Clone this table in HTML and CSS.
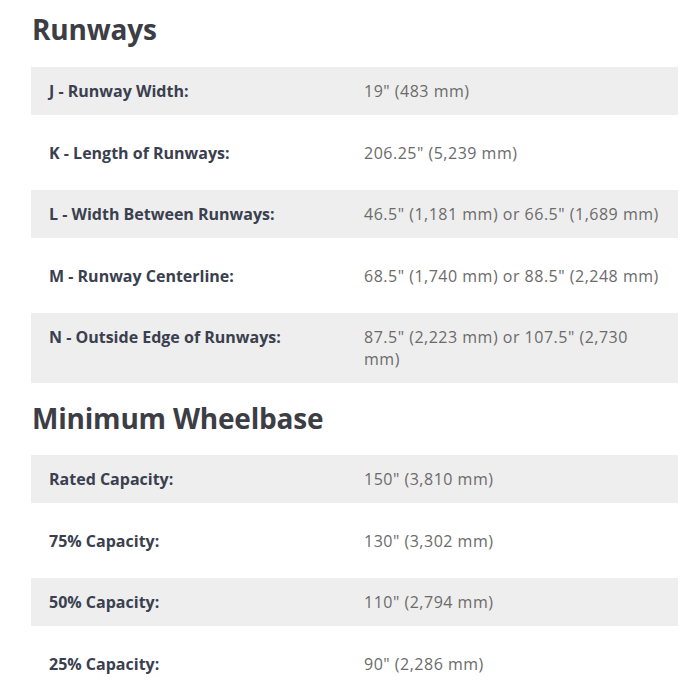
FILE: index.html
```html
<!DOCTYPE html>
<html>
<head>
<meta charset="utf-8">
<link rel="stylesheet" href="styles.css">
</head>
<body>
<div class="page">
  <h2 class="title">Runways</h2>
  <div class="spec">
    <div class="row shade"><div class="label">J - Runway Width:</div><div class="value">19" (483 mm)</div></div>
    <div class="row"><div class="label">K - Length of Runways:</div><div class="value">206.25" (5,239 mm)</div></div>
    <div class="row shade"><div class="label">L - Width Between Runways:</div><div class="value">46.5" (1,181 mm) or 66.5" (1,689 mm)</div></div>
    <div class="row"><div class="label">M - Runway Centerline:</div><div class="value">68.5" (1,740 mm) or 88.5" (2,248 mm)</div></div>
    <div class="row shade"><div class="label">N - Outside Edge of Runways:</div><div class="value">87.5" (2,223 mm) or 107.5" (2,730 mm)</div></div>
  </div>
  <h2 class="title second">Minimum Wheelbase</h2>
  <div class="spec">
    <div class="row shade"><div class="label">Rated Capacity:</div><div class="value">150" (3,810 mm)</div></div>
    <div class="row"><div class="label">75% Capacity:</div><div class="value">130" (3,302 mm)</div></div>
    <div class="row shade"><div class="label">50% Capacity:</div><div class="value">110" (2,794 mm)</div></div>
    <div class="row"><div class="label">25% Capacity:</div><div class="value">90" (2,286 mm)</div></div>
  </div>
</div>
</body>
</html>
```
FILE: styles.css
```css
html, body {
  margin: 0;
  padding: 0;
  background: #ffffff;
}
.page {
  width: 647px;
  margin-left: 31px;
  padding-top: 11px;
  font-family: "Open Sans", "Liberation Sans", sans-serif;
}
.title {
  margin: 0;
  padding-left: 1px;
  font-size: 28px;
  line-height: 36px;
  font-weight: 700;
  color: #3c3d45;
  letter-spacing: -0.2px;
  margin-bottom: 20px;
}
.title.second {
  margin-top: 17px;
  margin-bottom: 19px;
}
.spec {
  display: flex;
  flex-direction: column;
}
.row {
  display: grid;
  grid-template-columns: 315px 1fr;
  padding: 27px 15px 26px 18px;
  line-height: 22px;
  font-size: 16px;
}
.row.shade {
  background: #eeeeee;
  padding: 13px 15px 13px 18px;
}
.label {
  font-weight: 700;
  color: #3a404e;
  padding-right: 15px;
}
.value {
  color: #6b6b6b;
  font-weight: 400;
  letter-spacing: 0.5px;
}
```
